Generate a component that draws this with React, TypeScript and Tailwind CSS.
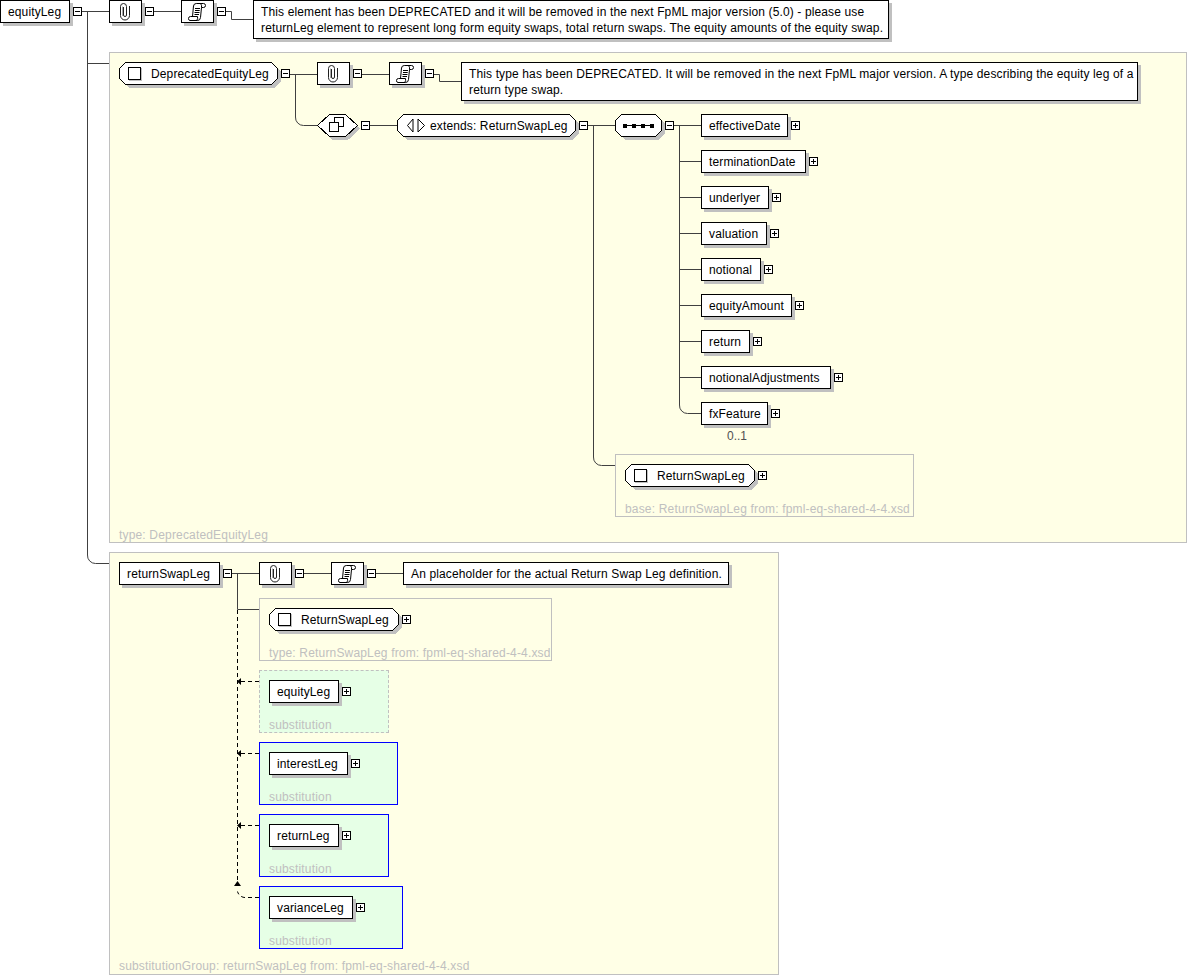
import React from 'react';

// all connectors of the diagram live in one svg between the panels and the nodes
const lines = [
  'M82 11.5H109', 'M87.5 11.5V555a8 8 0 0 0 8 8.5H109', 'M87.5 63.5H109',
  'M154 11.5H181', 'M226 11.5H231.5V19.5H253',
  'M290 74.5H317', 'M295.5 74.5V117a8 8 0 0 0 8 8.5H318',
  'M362 74.5H389', 'M434 74.5H439.5V81.5H461',
  'M370 125.5H397', 'M588 125.5H615', 'M593.5 125.5V457a8 8 0 0 0 8 8.5H615',
  'M674 125.5H701', 'M679.5 125.5V405a8 8 0 0 0 8 8.5H701',
  'M679.5 161.5H701', 'M679.5 197.5H701', 'M679.5 233.5H701', 'M679.5 269.5H701',
  'M679.5 305.5H701', 'M679.5 341.5H701', 'M679.5 377.5H701',
  'M232 573.5H259', 'M304 573.5H331', 'M376 573.5H403', 'M237.5 573.5V609.5H259',
];

const dashed = [
  'M237.5 610V882', 'M259 681.5H241', 'M259 753.5H241', 'M259 825.5H241',
  'M259 897.5H246a8 8 0 0 1 -8.5 -6',
];

function Connectors() {
  return (
    <svg className="absolute left-0 top-0 w-[1188px] h-[976px]" viewBox="0 0 1188 976" fill="none">
      {lines.map((d, i) => <path key={i} d={d} stroke="#404040" />)}
      {dashed.map((d, i) => <path key={i} d={d} stroke="#000" strokeDasharray="4 3" />)}
      <path d="M237 681.5l4-3.5v7zM237 753.5l4-3.5v7zM237 825.5l4-3.5v7zM237.5 881l-3.5 5h7z" fill="#000" />
    </svg>
  );
}

function Toggle({ open }: { open?: boolean }) {
  return (
    <svg className="w-[9px] h-[9px] shrink-0 ml-[3px] mt-[7px]" viewBox="0 0 9 9" shapeRendering="crispEdges">
      <rect x="0.5" y="0.5" width="8" height="8" fill="#fff" stroke="#000" />
      <path d="M2 4.5H7" stroke="#000" />
      {!open && <path d="M4.5 2V7" stroke="#000" />}
    </svg>
  );
}

function Box({ className, children }: { className: string; children?: React.ReactNode }) {
  return (
    <div className={`h-[23px] shrink-0 flex items-center bg-white border border-black shadow-[3px_3px_0_#c0c0c0] whitespace-nowrap text-xs ${className}`}>
      {children}
    </div>
  );
}

function Clip() {
  return (
    <Box className="w-[33px] ml-[27px]">
      <svg className="w-[31px] h-[21px]" viewBox="0 0 31 21" fill="none">
        <path d="M12.500 5.500V15" stroke="#a8a8a8" />
        <path d="M19.500 5V14.500a4.500 4.500 0 0 1 -9 0V5.500a3 3 0 0 1 6 0V14a1.500 1.500 0 0 1 -3 0V6" stroke="#202020" />
      </svg>
    </Box>
  );
}

function Scroll() {
  return (
    <Box className="w-[33px] ml-[27px]">
      <svg className="w-[31px] h-[21px]" viewBox="0 0 31 21" fill="none">
        <path d="M10.500 15.500L11.500 5Q11.800 2.500 14.300 2.500H21.500Q23.500 2.500 23.500 4.500Q23.500 6.500 21.500 6.500H19.500L18.500 16.500Q18.200 19.500 15.700 19.500H8Q6.500 19.500 6.500 17.500Q6.500 15.500 8.500 15.500H15.500Q16 17.500 15 19" stroke="#000" />
        <path d="M18.500 2.500Q20 4 19.500 6.500" stroke="#000" />
        <path d="M13 7.500H18M13 9.500H17.700M12.500 11.500H17.500M12.500 13.500H17" stroke="#000" />
      </svg>
    </Box>
  );
}

function Doc({ className, children }: { className: string; children: React.ReactNode }) {
  return (
    <div className={`shrink-0 ml-[27px] pl-[7px] pt-[3px] bg-white border border-black shadow-[3px_3px_0_#c0c0c0] text-xs leading-[16px] whitespace-nowrap ${className}`}>
      {children}
    </div>
  );
}

// chamfered or pointed outline behind a model group / complex type
function Shape({ className, w, kind, children }: { className: string; w: number; kind: 'octagon' | 'hexagon'; children?: React.ReactNode }) {
  const pts = kind === 'octagon'
    ? `6.5,0.5 ${w - 6.5},0.5 ${w - 0.5},6.5 ${w - 0.5},16.5 ${w - 6.5},22.5 6.5,22.5 0.5,16.5 0.5,6.5`
    : `12.5,0.5 ${w - 12.5},0.5 ${w - 0.5},11.5 ${w - 12.5},22.5 12.5,22.5 0.5,11.5`;
  return (
    <div className={`relative h-[23px] shrink-0 flex items-center whitespace-nowrap text-xs ${className}`}>
      <svg className="absolute left-0 top-0 overflow-visible" width={w} height={23} shapeRendering="crispEdges">
        <polygon points={pts} fill="#c0c0c0" transform="translate(3 3)" />
        <polygon points={pts} fill="#fff" stroke="#000" />
      </svg>
      {children}
    </div>
  );
}

function TypeShape({ label, w, className }: { label: string; w: number; className: string }) {
  return (
    <Shape className={`pl-[9px] gap-[10px] ${className}`} w={w} kind="octagon">
      <span className="relative w-[13px] h-[13px] border border-black bg-white shadow-[1px_1px_0_#c0c0c0]" />
      <span className="relative">{label}</span>
    </Shape>
  );
}

function Label({ className, children }: { className?: string; children: React.ReactNode }) {
  return <div className={`text-xs leading-[14px] tracking-[0.17px] text-[#c0c0c0] whitespace-nowrap ${className ?? ''}`}>{children}</div>;
}

const elements = [
  { label: 'effectiveDate', width: 'w-[87px]' },
  { label: 'terminationDate', width: 'w-[105px]' },
  { label: 'underlyer', width: 'w-[68px]' },
  { label: 'valuation', width: 'w-[66px]' },
  { label: 'notional', width: 'w-[60px]' },
  { label: 'equityAmount', width: 'w-[91px]' },
  { label: 'return', width: 'w-[49px]' },
  { label: 'notionalAdjustments', width: 'w-[130px]' },
  { label: 'fxFeature', width: 'w-[67px]' },
];

const substitutions = [
  { label: 'equityLeg', panel: 'w-[130px] border-dashed border-[#c0c0c0]', width: 'w-[70px]' },
  { label: 'interestLeg', panel: 'w-[139px] border-[#0000ff]', width: 'w-[79px]' },
  { label: 'returnLeg', panel: 'w-[130px] border-[#0000ff]', width: 'w-[70px]' },
  { label: 'varianceLeg', panel: 'w-[144px] border-[#0000ff]', width: 'w-[84px]' },
];

export default function App() {
  return (
    <div className="relative w-[1188px] h-[976px] overflow-hidden bg-white text-black tracking-[0.13px] font-['Liberation_Sans',Arial,sans-serif]">
      <div className="absolute left-[109px] top-[52px] w-[1078px] h-[491px] bg-[#ffffe6] border border-[#c0c0c0] flex flex-col justify-end pl-[9px]">
        <Label className="tracking-[0.05px]">type: DeprecatedEquityLeg</Label>
      </div>
      <div className="absolute left-[109px] top-[552px] w-[670px] h-[423px] bg-[#ffffe6] border border-[#c0c0c0] flex flex-col justify-end pl-[9px] pb-[1px]">
        <Label>substitutionGroup: returnSwapLeg from: fpml-eq-shared-4-4.xsd</Label>
      </div>

      {/* top element and its annotation */}
      <div className="absolute left-0 top-0 z-10 flex items-start">
        <Box className="w-[70px] pl-[7px]">equityLeg</Box>
        <Toggle open />
        <Clip />
        <Toggle open />
        <Scroll />
        <Toggle open />
        <Doc className="w-[636px] h-[39px]">
          This element has been DEPRECATED and it will be removed in the next FpML major version (5.0) - please use<br />
          returnLeg element to represent long form equity swaps, total return swaps. The equity amounts of the equity swap.
        </Doc>
      </div>

      {/* DeprecatedEquityLeg type */}
      <div className="absolute left-[119px] top-[62px] z-10 flex items-start">
        <TypeShape label="DeprecatedEquityLeg" w={159} className="w-[159px]" />
        <Toggle open />
        <Clip />
        <Toggle open />
        <Scroll />
        <Toggle open />
        <Doc className="w-[677px] h-[39px]">
          This type has been DEPRECATED. It will be removed in the next FpML major version. A type describing the equity leg of a<br />
          return type swap.
        </Doc>
      </div>

      <div className="absolute left-[317px] top-[114px] z-10 flex items-start">
        <Shape className="w-[41px] pl-[12px]" w={41} kind="hexagon">
          <svg className="relative w-[15px] h-[19px]" viewBox="0 0 15 19" shapeRendering="crispEdges">
            <rect x="5.5" y="1.500" width="9" height="9" fill="#fff" stroke="#000" />
            <rect x="0.5" y="6.500" width="9" height="9" fill="#fff" stroke="#000" />
          </svg>
        </Shape>
        <Toggle open />
        <Shape className="w-[179px] ml-[27px] pl-[10px] gap-[5px]" w={179} kind="octagon">
          <svg className="relative w-[18px] h-[15px]" viewBox="0 0 18 15" fill="none">
            <path d="M6 1L0.500 7.500L6 14ZM11 1L17.500 7.500L11 14Z" stroke="#000" />
          </svg>
          <span className="relative">extends: ReturnSwapLeg</span>
        </Shape>
        <Toggle open />
        <Shape className="w-[47px] ml-[27px] pl-[8px]" w={47} kind="octagon">
          <svg className="relative w-[31px] h-[5px]" viewBox="0 0 31 5" shapeRendering="crispEdges">
            <path d="M0 2.500H31" stroke="#000" />
            <path d="M0 1h4v3.500H0zM9 1h4v3.500H9zM18 1h4v3.500h-4zM27 1h4v3.500h-4z" fill="#000" />
          </svg>
        </Shape>
        <Toggle open />
        <div className="ml-[27px] flex flex-col gap-[13px]">
          {elements.map(el => (
            <div key={el.label} className="flex items-start">
              <Box className={`pl-[7px] ${el.width}`}>{el.label}</Box>
              <Toggle />
            </div>
          ))}
          <div className="-mt-[9px] ml-[26px] text-xs leading-[14px] tracking-normal text-[#505050]">0..1</div>
        </div>
      </div>

      <div className="absolute left-[615px] top-[454px] z-10 w-[299px] h-[63px] border border-[#c0c0c0] pl-[9px] pt-[9px] flex flex-col gap-[15px]">
        <div className="flex items-start">
          <TypeShape label="ReturnSwapLeg" w={130} className="w-[130px]" />
          <Toggle />
        </div>
        <Label>base: ReturnSwapLeg from: fpml-eq-shared-4-4.xsd</Label>
      </div>

      {/* returnSwapLeg head element */}
      <div className="absolute left-[119px] top-[562px] z-10 flex items-start">
        <Box className="w-[101px] pl-[7px]">returnSwapLeg</Box>
        <Toggle open />
        <Clip />
        <Toggle open />
        <Scroll />
        <Toggle open />
        <Box className="w-[326px] ml-[27px] pl-[7px]">An placeholder for the actual Return Swap Leg definition.</Box>
      </div>

      <div className="absolute left-[259px] top-[598px] flex flex-col gap-[9px]">
        <div className="w-[293px] h-[63px] border border-[#c0c0c0] pl-[9px] pt-[9px] flex flex-col gap-[15px]">
          <div className="flex items-start">
            <TypeShape label="ReturnSwapLeg" w={130} className="w-[130px]" />
            <Toggle />
          </div>
          <Label>type: ReturnSwapLeg from: fpml-eq-shared-4-4.xsd</Label>
        </div>
        {substitutions.map(s => (
          <div key={s.label} className={`h-[63px] bg-[#e6ffe6] border pl-[9px] pt-[9px] flex flex-col gap-[15px] ${s.panel}`}>
            <div className="flex items-start">
              <Box className={`pl-[7px] ${s.width}`}>{s.label}</Box>
              <Toggle />
            </div>
            <Label>substitution</Label>
          </div>
        ))}
      </div>

      <Connectors />
    </div>
  );
}
